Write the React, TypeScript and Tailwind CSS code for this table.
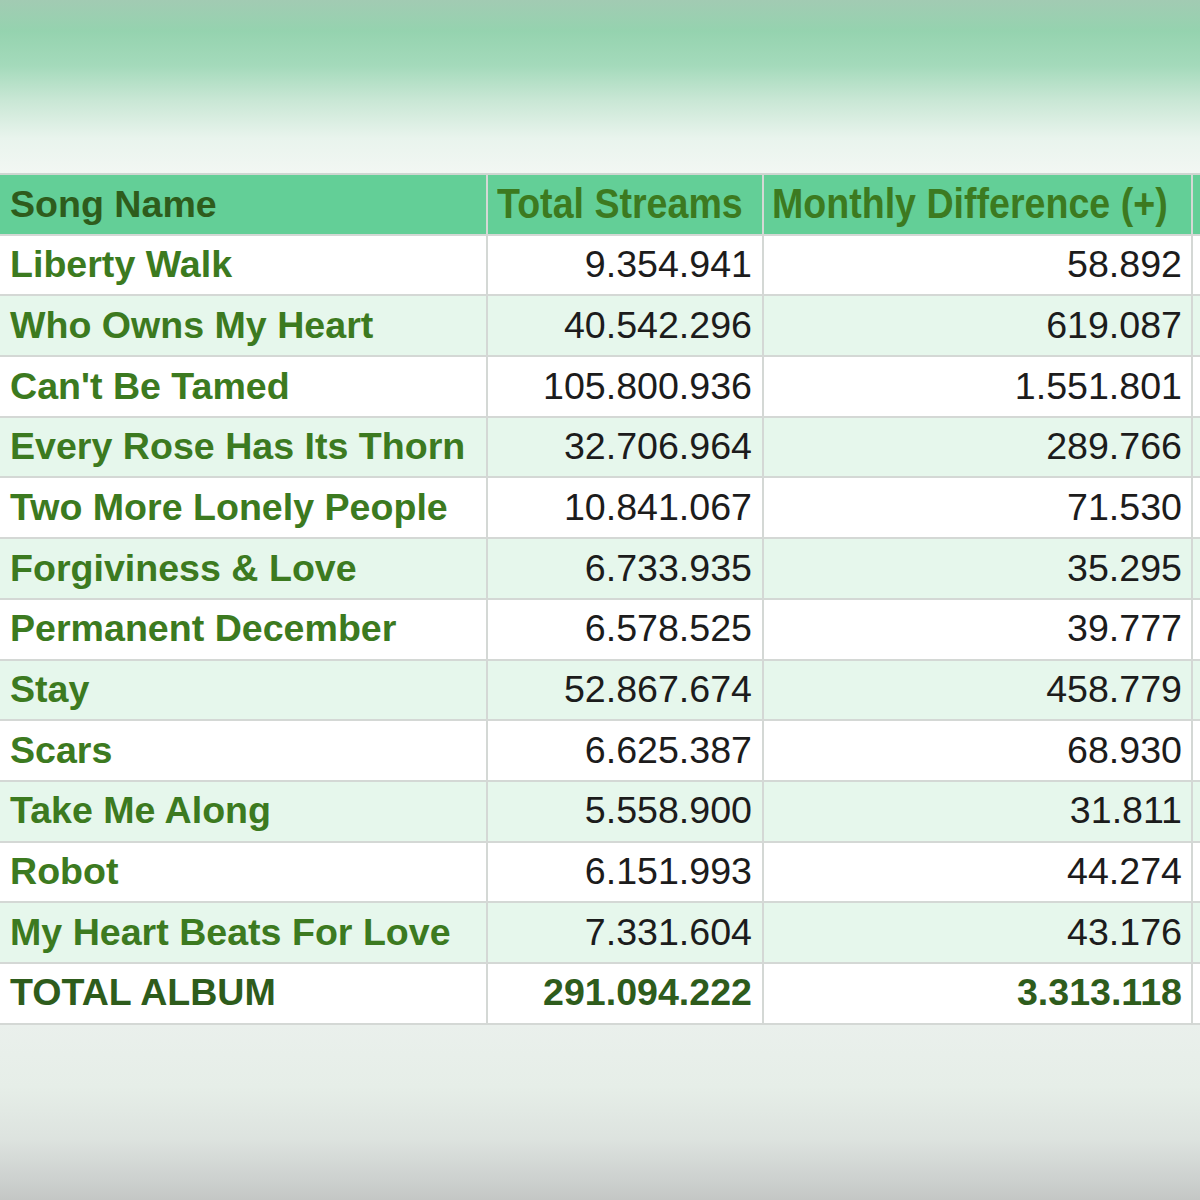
import React from "react"

interface Song {
  name: string
  total: string
  monthly: string
}

const songs: Song[] = [
  { name: "Liberty Walk", total: "9.354.941", monthly: "58.892" },
  { name: "Who Owns My Heart", total: "40.542.296", monthly: "619.087" },
  { name: "Can't Be Tamed", total: "105.800.936", monthly: "1.551.801" },
  { name: "Every Rose Has Its Thorn", total: "32.706.964", monthly: "289.766" },
  { name: "Two More Lonely People", total: "10.841.067", monthly: "71.530" },
  { name: "Forgiviness & Love", total: "6.733.935", monthly: "35.295" },
  { name: "Permanent December", total: "6.578.525", monthly: "39.777" },
  { name: "Stay", total: "52.867.674", monthly: "458.779" },
  { name: "Scars", total: "6.625.387", monthly: "68.930" },
  { name: "Take Me Along", total: "5.558.900", monthly: "31.811" },
  { name: "Robot", total: "6.151.993", monthly: "44.274" },
  { name: "My Heart Beats For Love", total: "7.331.604", monthly: "43.176" },
]

const rowGrid = "grid grid-cols-[488px_276px_429px_7px] h-[60.7px] border-b-2 border-[#d4d8d5]"
const cell = "flex items-center border-r-2 border-[#d4d8d5] overflow-hidden"

export default function App() {
  return (
    <div className="w-[1200px] h-[1200px] flex flex-col bg-white font-['Liberation_Sans',Arial,sans-serif] text-[37.6px] leading-none">
      <div className="h-[175px] shrink-0 bg-[linear-gradient(180deg,#a2cbb3_0%,#95d3af_18%,#a4dabb_38%,#c9e7d5_58%,#e9f4ed_80%,#f2f7f3_100%)] border-b-2 border-[#cfd6d1]" />

      <div className="flex flex-col">
        <div className={`${rowGrid} bg-[#63cf97]`}>
          <div className={`${cell} pl-[10px] font-bold text-[#2e5c1c]`}>Song Name</div>
          <div className={`${cell} pl-[9px] font-bold text-[#3c7a20]`}>
            <span className="inline-block scale-y-[1.12]">Total Streams</span>
          </div>
          <div className={`${cell} pl-[8px] font-bold text-[#3c7a20]`}>
            <span className="inline-block scale-y-[1.12]">Monthly Difference (+)</span>
          </div>
          <div />
        </div>

        {songs.map((song, i) => (
          <div key={song.name} className={`${rowGrid} ${i % 2 === 1 ? "bg-[#e6f7ec]" : "bg-white"}`}>
            <div className={`${cell} pl-[10px] font-bold text-[#3c7a20]`}>{song.name}</div>
            <div className={`${cell} justify-end pr-[10px] text-[#1c1c1c]`}>{song.total}</div>
            <div className={`${cell} justify-end pr-[9px] text-[#1c1c1c]`}>{song.monthly}</div>
            <div />
          </div>
        ))}

        <div className={`${rowGrid} bg-white`}>
          <div className={`${cell} pl-[10px] font-bold text-[#2e5c1c]`}>TOTAL ALBUM</div>
          <div className={`${cell} justify-end pr-[10px] font-bold text-[#2e5c1c]`}>291.094.222</div>
          <div className={`${cell} justify-end pr-[9px] font-bold text-[#2e5c1c]`}>3.313.118</div>
          <div />
        </div>
      </div>

      <div className="flex-1 bg-[linear-gradient(180deg,#eaf0ec_0%,#e6eee8_35%,#dde3df_65%,#cdd1cf_88%,#c4c7c5_100%)]" />
    </div>
  )
}
